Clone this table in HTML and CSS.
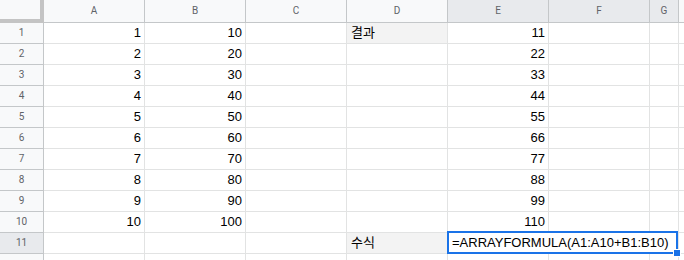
FILE: index.html
```html
<!DOCTYPE html>
<html lang="ko">
<head>
<meta charset="utf-8">
<title>Sheet</title>
<link rel="stylesheet" href="styles.css">
</head>
<body>
<div class="sheet">
  <div class="grid">
    <div class="corner"></div>
    <div class="colh">A</div><div class="colh">B</div><div class="colh">C</div><div class="colh">D</div>
    <div class="colh sel">E</div><div class="colh sel">F</div><div class="colh sel">G</div><div class="colh"></div>

    <div class="rowh">1</div><div class="c num">1</div><div class="c num">10</div><div class="c"></div><div class="c label">결과</div><div class="c num">11</div><div class="c"></div><div class="c"></div><div class="c"></div>
    <div class="rowh">2</div><div class="c num">2</div><div class="c num">20</div><div class="c"></div><div class="c"></div><div class="c num">22</div><div class="c"></div><div class="c"></div><div class="c"></div>
    <div class="rowh">3</div><div class="c num">3</div><div class="c num">30</div><div class="c"></div><div class="c"></div><div class="c num">33</div><div class="c"></div><div class="c"></div><div class="c"></div>
    <div class="rowh">4</div><div class="c num">4</div><div class="c num">40</div><div class="c"></div><div class="c"></div><div class="c num">44</div><div class="c"></div><div class="c"></div><div class="c"></div>
    <div class="rowh">5</div><div class="c num">5</div><div class="c num">50</div><div class="c"></div><div class="c"></div><div class="c num">55</div><div class="c"></div><div class="c"></div><div class="c"></div>
    <div class="rowh">6</div><div class="c num">6</div><div class="c num">60</div><div class="c"></div><div class="c"></div><div class="c num">66</div><div class="c"></div><div class="c"></div><div class="c"></div>
    <div class="rowh">7</div><div class="c num">7</div><div class="c num">70</div><div class="c"></div><div class="c"></div><div class="c num">77</div><div class="c"></div><div class="c"></div><div class="c"></div>
    <div class="rowh">8</div><div class="c num">8</div><div class="c num">80</div><div class="c"></div><div class="c"></div><div class="c num">88</div><div class="c"></div><div class="c"></div><div class="c"></div>
    <div class="rowh">9</div><div class="c num">9</div><div class="c num">90</div><div class="c"></div><div class="c"></div><div class="c num">99</div><div class="c"></div><div class="c"></div><div class="c"></div>
    <div class="rowh">10</div><div class="c num">10</div><div class="c num">100</div><div class="c"></div><div class="c"></div><div class="c num">110</div><div class="c"></div><div class="c"></div><div class="c"></div>
    <div class="rowh sel">11</div><div class="c"></div><div class="c"></div><div class="c"></div><div class="c label">수식</div><div class="c"></div><div class="c"></div><div class="c"></div><div class="c"></div>
    <div class="rowh"></div><div class="c"></div><div class="c"></div><div class="c"></div><div class="c"></div><div class="c"></div><div class="c"></div><div class="c"></div><div class="c"></div>
  </div>
  <div class="editor">=ARRAYFORMULA(A1:A10+B1:B10)<span class="handle"></span></div>
</div>
</body>
</html>
```

FILE: styles.css
```css
html, body {
  margin: 0;
  padding: 0;
  background: #ffffff;
  overflow: hidden;
}

.sheet {
  position: relative;
  width: 684px;
  height: 260px;
  overflow: hidden;
  font-family: "Liberation Sans", Arial, "Noto Sans CJK KR", sans-serif;
}

.grid {
  display: grid;
  grid-template-columns: 44px repeat(6, 101px) 29px 1fr;
  grid-template-rows: 23px repeat(12, 21px);
}

.grid > div {
  box-sizing: border-box;
}

.corner {
  background: #f8f9fa;
  border-right: 4px solid #c4c4c4;
  border-bottom: 4px solid #c4c4c4;
  height: 23px;
}

.colh {
  background: #f8f9fa;
  border-right: 1px solid #c4c7c9;
  border-bottom: 1px solid #c4c7c9;
  font-family: Roboto, "Liberation Sans", Arial, sans-serif;
  font-size: 10px;
  color: #5f6368;
  text-align: center;
  line-height: 22px;
}

.colh.sel,
.rowh.sel {
  background: #e8eaed;
}

.rowh {
  background: #f8f9fa;
  border-right: 1px solid #c4c7c9;
  border-bottom: 1px solid #c4c7c9;
  font-family: Roboto, "Liberation Sans", Arial, sans-serif;
  font-size: 10px;
  color: #5f6368;
  text-align: center;
  line-height: 20px;
}

.c {
  border-right: 1px solid #e2e3e3;
  border-bottom: 1px solid #e2e3e3;
  font-size: 13px;
  line-height: 20px;
  color: #000000;
  padding: 0 3px;
  white-space: nowrap;
  overflow: hidden;
}

.num {
  text-align: right;
}

.label {
  background: #f3f3f3;
  padding-left: 4px;
}

.editor {
  position: absolute;
  left: 447px;
  top: 231px;
  width: 231px;
  height: 23px;
  box-sizing: border-box;
  border: 2px solid #1a73e8;
  background: #ffffff;
  font-size: 13px;
  line-height: 19px;
  padding-left: 3px;
  color: #000000;
  white-space: nowrap;
}

.handle {
  position: absolute;
  right: -5px;
  bottom: -5px;
  width: 6px;
  height: 6px;
  background: #1a73e8;
  border: 1px solid #ffffff;
}
```
